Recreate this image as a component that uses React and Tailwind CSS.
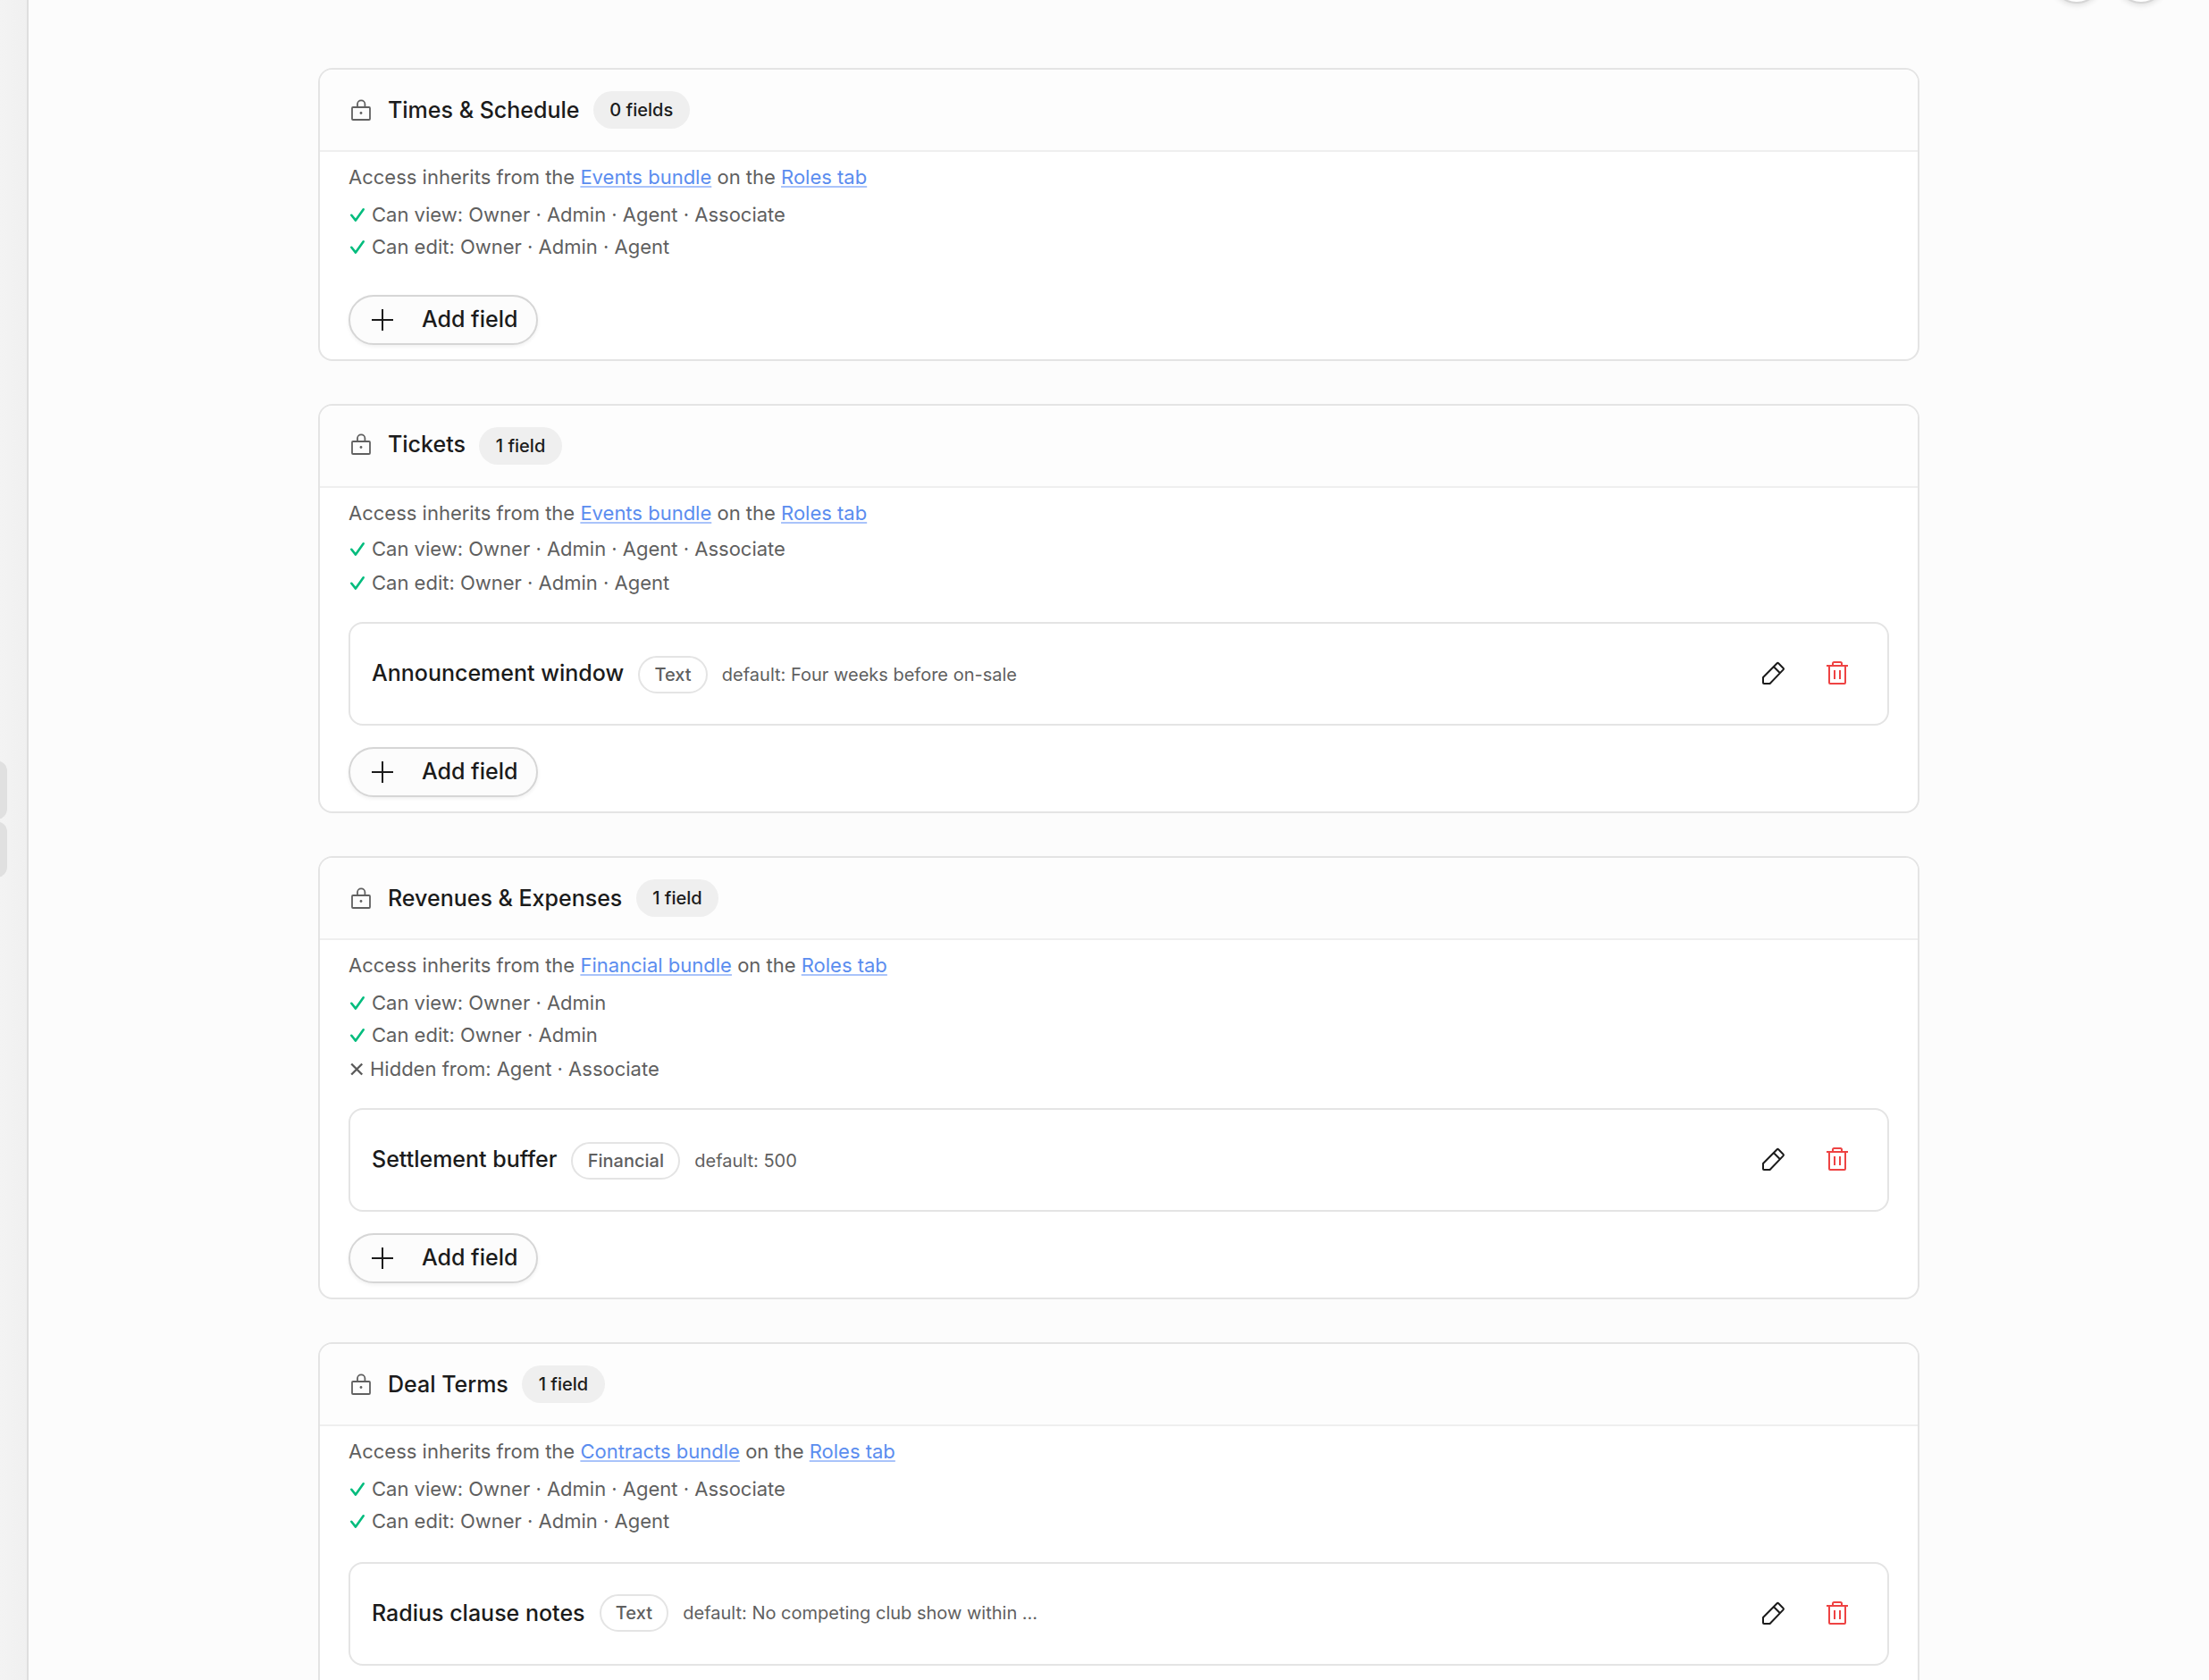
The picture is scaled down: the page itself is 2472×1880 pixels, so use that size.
const ALL_VIEW = 'Can view: Owner · Admin · Agent · Associate'
const ALL_EDIT = 'Can edit: Owner · Admin · Agent'

const sections = [
  {
    title: 'Times & Schedule',
    count: '0 fields',
    bundle: 'Events bundle',
    canAdd: true,
    access: [
      { text: ALL_VIEW, className: 'mt-1.5' },
      { text: ALL_EDIT },
    ],
    listClass: 'mt-9',
    fields: [],
  },
  {
    title: 'Tickets',
    count: '1 field',
    bundle: 'Events bundle',
    canAdd: true,
    raised: true,
    access: [
      { text: ALL_VIEW, className: 'mt-1' },
      { text: ALL_EDIT, className: 'mt-0.5' },
    ],
    listClass: 'mt-[26px]',
    fields: [{ name: 'Announcement window', type: 'Text', value: 'Four weeks before on-sale', metaClass: 'mt-0.5' }],
  },
  {
    title: 'Revenues & Expenses',
    count: '1 field',
    bundle: 'Financial bundle',
    canAdd: true,
    access: [
      { text: 'Can view: Owner · Admin', className: 'mt-1.5' },
      { text: 'Can edit: Owner · Admin' },
      { text: 'Hidden from: Agent · Associate', className: 'mt-0.5', hidden: true },
    ],
    listClass: 'mt-[26px]',
    fields: [{ name: 'Settlement buffer', type: 'Financial', value: '500', metaClass: 'mt-0.5' }],
  },
  {
    title: 'Deal Terms',
    count: '1 field',
    bundle: 'Contracts bundle',
    canAdd: false,
    access: [
      { text: ALL_VIEW, className: 'mt-1.5' },
      { text: ALL_EDIT },
    ],
    listClass: 'mt-7',
    fields: [{ name: 'Radius clause notes', type: 'Text', value: 'No competing club show within ...', metaClass: 'mb-0.5' }],
  },
]

function LockIcon({ className = '' }) {
  return (
    <svg viewBox="0 0 28 28" className={`size-7 shrink-0 ${className}`} fill="none" stroke="#606060" strokeWidth="1.8">
      <rect x="4" y="11" width="20" height="14" rx="1" />
      <path d="M10 11V7.5a4.2 4.2 0 0 1 8.4 0V11" />
      <circle cx="14" cy="17.5" r="1.4" fill="#606060" stroke="none" />
    </svg>
  )
}

function CheckIcon() {
  return (
    <svg viewBox="0 0 26 20" className="w-[26px] h-5 shrink-0" fill="none" stroke="#00bc7d" strokeWidth="2.6" strokeLinecap="round" strokeLinejoin="round">
      <path d="M3.3 10.8L8 16.6L16.7 4.3" />
    </svg>
  )
}

function CrossIcon() {
  return (
    <svg viewBox="0 0 24 20" className="w-6 h-5 shrink-0" fill="none" stroke="#5a5a5a" strokeWidth="2.4">
      <path d="M3.2 4.5L15.2 16.5M15.2 4.5L3.2 16.5" />
    </svg>
  )
}

function PlusIcon() {
  return (
    <svg viewBox="0 0 24 24" className="size-6" fill="none" stroke="#1b1b1b" strokeWidth="2">
      <path d="M12 0V24M0 12H24" />
    </svg>
  )
}

function PencilIcon() {
  return (
    <svg viewBox="0 0 28 28" className="size-7" fill="none" stroke="#1b1b1b" strokeWidth="2" strokeLinejoin="round">
      <path d="M3 18L18.6 2.3Q19.4 1.5 20.2 2.3L25.6 7.8Q26.4 8.6 25.6 9.4L10.6 25H4Q3 25 3 24ZM14.8 6L22 13.2" />
    </svg>
  )
}

function TrashIcon() {
  return (
    <svg viewBox="0 0 28 28" className="size-7 overflow-visible" fill="none" stroke="#ee4343" strokeWidth="2">
      <path d="M2 5H26M9 5V2.5Q9 1 10.5 1H17.5Q19 1 19 2.5V5M5 5V24Q5 25 6 25H22Q23 25 23 24V5M11 10V20M17 10V20" />
    </svg>
  )
}

function Link({ children }) {
  return (
    <a href="#" className="text-[#5b8def] underline decoration-2 decoration-[#a9c3fa] underline-offset-2">
      {children}
    </a>
  )
}

function FieldRow({ field }) {
  return (
    <div className="flex items-center h-[116px] rounded-2xl border-2 border-[#e4e4e4] pl-6 pr-[42px] mb-6">
      <span className="text-[25px] leading-9 font-medium text-[#1b1b1b] whitespace-nowrap mb-0.5">{field.name}</span>
      <div className={`flex items-center gap-4 ml-4 ${field.metaClass}`}>
        <span className="flex items-center h-[42px] px-[16.3px] rounded-full border-2 border-[#e4e4e4] text-xl leading-none font-medium text-[#5f5f5f]">
          {field.type}
        </span>
        <span className="text-xl leading-none text-[#5f5f5f] whitespace-nowrap">default: {field.value}</span>
      </div>
      <div className="flex items-center gap-11 ml-auto">
        <button><PencilIcon /></button>
        <button><TrashIcon /></button>
      </div>
    </div>
  )
}

function Section({ section }) {
  const raised = section.raised ? 'mb-1' : ''
  return (
    <section className="bg-white rounded-2xl border-2 border-[#e4e4e4] overflow-hidden">
      <header className="flex items-center h-[92px] px-8 bg-[#fdfdfd] border-b-2 border-[#efefef]">
        <LockIcon className={raised} />
        <h3 className={`ml-4 text-[25px] leading-9 font-medium text-[#1b1b1b] ${raised}`}>{section.title}</h3>
        <span className="flex items-center ml-[15.5px] h-[42px] px-[18.4px] rounded-full bg-[#efefef] text-xl leading-none font-medium text-[#1b1b1b]">
          {section.count}
        </span>
      </header>
      <div className="px-8 pt-2.5 pb-4">
        <div className="text-[22px] leading-9 text-[#5f5f5f]">
          <p>
            Access inherits from the <Link>{section.bundle}</Link> on the <Link>Roles tab</Link>
          </p>
          {section.access.map((line) => (
            <p key={line.text} className={`flex items-center ${line.className || ''}`}>
              {line.hidden ? <CrossIcon /> : <CheckIcon />}
              {line.text}
            </p>
          ))}
        </div>
        <div className={section.listClass}>
          {section.fields.map((field) => (
            <FieldRow key={field.name} field={field} />
          ))}
          {section.canAdd && (
            <button className="flex items-center gap-8 w-[212px] h-14 pl-6 rounded-full border-2 border-[#d6d6d6] bg-[#fcfcfc] shadow-[0_2px_4px_rgba(0,0,0,0.06)] text-[25px] font-medium text-[#1b1b1b] whitespace-nowrap">
              <PlusIcon />
              Add field
            </button>
          )}
        </div>
      </div>
    </section>
  )
}

export default function App() {
  return (
    <div className="relative flex w-[2472px] h-[1880px] overflow-hidden bg-[#fcfcfc] font-['Inter',sans-serif]">
      <aside className="w-8 shrink-0 border-r-2 border-[#dedede] bg-linear-to-r from-[#f3f3f3] to-[#f0f0f0] pt-[851px]">
        <div className="w-6 h-[66px] -ml-4 rounded-2xl bg-[#e0e0e0]" />
        <div className="w-6 h-[63px] mt-0.5 -ml-4 rounded-2xl bg-[#e0e0e0]" />
      </aside>
      <main className="flex-1 pt-[76px]">
        <div className="flex flex-col gap-12 w-[1792px] mx-auto">
          {sections.map((section) => (
            <Section key={section.title} section={section} />
          ))}
        </div>
      </main>
      {/* floating toolbar, scrolled almost out of view */}
      <div className="absolute -top-[52px] right-12 flex gap-4">
        <button className="size-14 rounded-full border-2 border-[#d6d6d6] bg-white shadow-[0_2px_6px_rgba(0,0,0,0.12)]" />
        <button className="size-14 rounded-full border-2 border-[#d6d6d6] bg-white shadow-[0_2px_6px_rgba(0,0,0,0.12)]" />
      </div>
    </div>
  )
}
